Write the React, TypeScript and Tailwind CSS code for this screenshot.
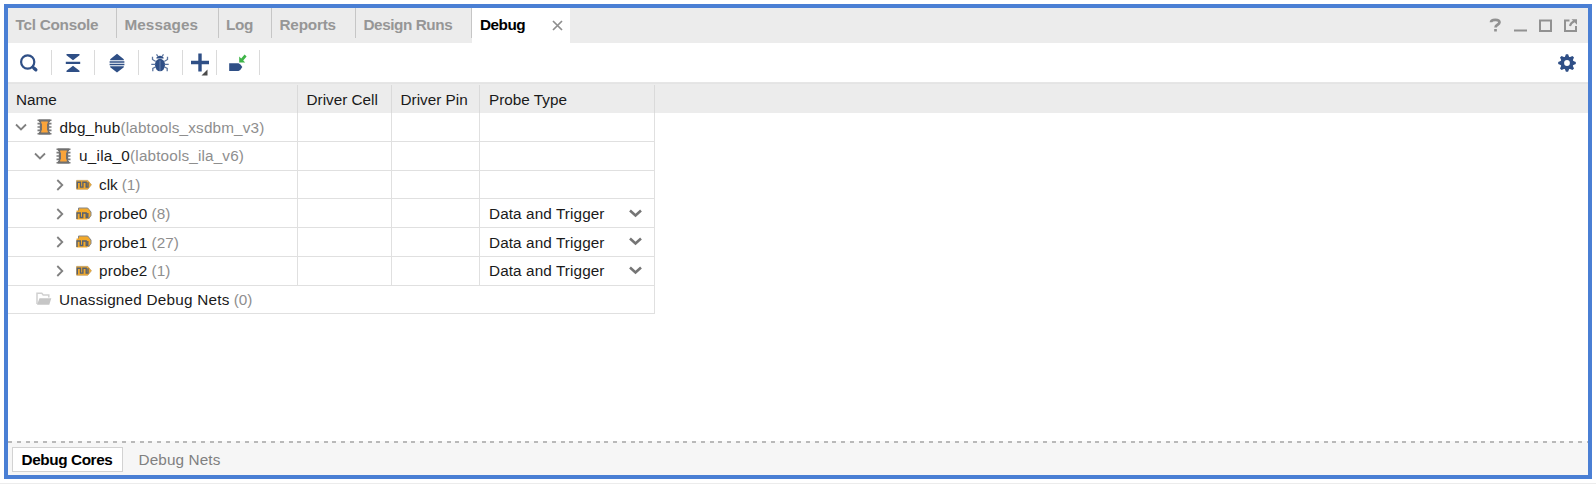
import type { ReactNode } from "react";

const NAVY = "#2f4f86";

const Sep = () => <div className="mt-px h-[25px] w-px shrink-0 bg-[#dadada]" />;

const Tool = ({ children, w }: { children: ReactNode; w: string }) => (
  <div className={`flex h-full shrink-0 items-center justify-center pt-px ${w}`}>{children}</div>
);

const SearchIcon = () => (
  <svg width="20" height="20" viewBox="0 0 20 20" fill="none" stroke={NAVY}>
    <circle cx="8.700" cy="9" r="6.600" strokeWidth="2.200" />
    <path d="M13 13.200l2 2" strokeWidth="2.400" />
    <path d="M15 15.200l1.800 1.600" strokeWidth="3.400" strokeLinecap="round" />
  </svg>
);
const CollapseIcon = () => (
  <svg width="20" height="20" viewBox="0 0 20 20" fill={NAVY}>
    <path d="M3.500 1h13v1.200L10 7.200 3.500 2.200zM2.800 8.800h14.400v2.200H2.800zM10 12.800l6.500 5V19h-13v-1.200z" />
  </svg>
);
const ExpandIcon = () => (
  <svg width="20" height="20" viewBox="0 0 20 20" fill={NAVY}>
    <path d="M10 0.800l6.800 5.400v1H3.200v-1zM2.600 8.200h14.800v1.500H2.600zM2.600 10.800h14.800v1.500H2.600zM3.200 13.200h13.600v1L10 19.400l-6.800-5.200z" />
  </svg>
);
const BugIcon = () => (
  <svg width="20" height="20" viewBox="0 0 20 20">
    <ellipse cx="10" cy="12" rx="5" ry="6.300" fill={NAVY} />
    <path d="M6.300 5.600C6.300 1.800 13.700 1.800 13.700 5.600z" fill={NAVY} />
    <path d="M8 3.500L6.500 1.300M12 3.500l1.500-2.200M5.800 8.500L2.500 6.500V3.800M14.200 8.500L17.500 6.500V3.800M1.300 11.300h4.200M18.700 11.300h-4.200M5.800 13.800L2.800 15.500v2.700M14.200 13.800L17.200 15.500v2.700" fill="none" stroke="#5d769f" strokeWidth="1.300" />
    <path d="M10 7.500V18" stroke="#7089b3" strokeWidth="0.900" />
  </svg>
);
const PlusIcon = () => (
  <svg width="24" height="26" viewBox="0 0 24 26">
    <path d="M4 12.500h18M13 3.500v18" stroke={NAVY} strokeWidth="3.400" />
    <path d="M20.500 19.500v6h-6z" fill="#4a4a4a" />
  </svg>
);
const ProbeArrowIcon = () => (
  <svg width="20" height="20" viewBox="0 0 20 20">
    <path d="M1.200 10.200H10.500Q12.500 10.800 14.300 14Q12.500 17.400 10.500 18H1.200z" fill={NAVY} />
    <path d="M11.200 3.400v6h6l-2-2 3.400-3.800-2-2-3.400 3.800z" fill="#3fb549" />
  </svg>
);
const GearIcon = () => (
  <svg width="20" height="20" viewBox="0 0 20 20">
    <g fill={NAVY}>
      {[0, 45, 90, 135].map((a) => (
        <path key={a} d="M8.900 1.200h2.200l1.100 3v11.600l-1.100 3H8.900l-1.100-3V4.200z" transform={`rotate(${a} 10 10)`} />
      ))}
      <circle cx="10" cy="10" r="6.500" />
    </g>
    <circle cx="10" cy="10" r="2.900" fill="#fff" />
  </svg>
);
const ChipIcon = () => (
  <svg width="16" height="16" viewBox="0 0 16 16" className="shrink-0">
    <path d="M0.500 1.200h14M0.500 4.600h14M0.500 8h14M0.500 11.400h14M0.500 14.800h14" stroke="#7c7c7c" strokeWidth="1.600" />
    <path d="M1.800 0.400h11.400v2l-1 1v9.200l1 1v2H1.800v-2l1-1V3.400l-1-1z" fill="#707070" />
    <path d="M4.200 2.500h6.600v1.600l-.8 1v5.800l.8 1v1.600H4.200v-1.600l.8-1V5.100l-.8-1z" fill="#f9a43a" />
  </svg>
);
const PinIcon = ({ bus }: { bus: boolean }) => (
  <svg width="16" height="16" viewBox="0 0 16 16" className="shrink-0">
    {bus ? (
      <>
        <path d="M2.500 5V2h9.200l3.300 4v3.500L12.500 13" fill="#f2a92b" stroke="#858585" strokeWidth="1" />
        <path d="M0.500 4.600h10.800l2.400 4.100-2.400 4.900H0.500z" fill="#f2a92b" />
        <path d="M1 13V7h3.300v4.500h2.400V7h3.500v4.500h1.600V7" fill="none" stroke="#56606f" strokeWidth="1.400" />
      </>
    ) : (
      <>
        <path d="M0.600 3.400h11.200l3.600 4.400-3.600 4.400H0.600z" fill="#f2a92b" stroke="#c39a55" strokeWidth="0.800" />
        <path d="M1.300 11.500V5.300h3.200v4.800h2.400V5.300h3.300v4.800h1.800V5.300" fill="none" stroke="#56606f" strokeWidth="1.400" />
      </>
    )}
  </svg>
);
const FolderIcon = () => (
  <svg width="16" height="14" viewBox="0 0 16 14" className="shrink-0">
    <path d="M1 12V1.200h4.800l1.400 1.800h5.600v2.500" fill="none" stroke="#d0d0d0" strokeWidth="1.500" />
    <path d="M3.500 6.300H15.300l-2 6.500H1z" fill="#c6c6c6" />
  </svg>
);
const Chevron = ({ open }: { open: boolean }) => (
  <svg width="12" height="12" viewBox="0 0 12 12" className="shrink-0" fill="none" stroke="#808080" strokeWidth="1.800">
    <path d={open ? "M1 3.500l5 5 5-5" : "M3.300 1l5 5-5 5"} />
  </svg>
);

const tabs = [
  { label: "Tcl Console", w: "w-[109px] tracking-[-0.250px]" },
  { label: "Messages", w: "w-[101.500px] tracking-[0.060px]" },
  { label: "Log", w: "w-[53.500px] tracking-[-0.300px]" },
  { label: "Reports", w: "w-[84px] tracking-[-0.200px]" },
  { label: "Design Runs", w: "w-[116px] tracking-[-0.430px]" },
];

const rows = [
  { pad: "pl-[6.500px]", open: true, icon: "chip", name: "dbg_hub", nt: "tracking-[0.200px]", note: "(labtools_xsdbm_v3)", gap: "tracking-[0.150px]" },
  { pad: "pl-[26px]", open: true, icon: "chip", name: "u_ila_0", nt: "tracking-[0.250px]", note: "(labtools_ila_v6)", gap: "tracking-[0.150px]" },
  { pad: "pl-[46px]", open: false, icon: "pin", name: "clk", nt: "", note: "(1)", gap: "ml-1" },
  { pad: "pl-[46px]", open: false, icon: "bus", name: "probe0", nt: "tracking-[0.150px]", note: "(8)", gap: "ml-1", type: true },
  { pad: "pl-[46px]", open: false, icon: "bus", name: "probe1", nt: "tracking-[0.150px]", note: "(27)", gap: "ml-1", type: true },
  { pad: "pl-[46px]", open: false, icon: "pin", name: "probe2", nt: "tracking-[0.150px]", note: "(1)", gap: "ml-1", type: true },
];

const GRID = "grid grid-cols-[289.500px_94px_88.500px_175px]";
const CELL = "border-r border-[#e0e0e0]";

export default function App() {
  return (
    <div className="h-[484px] w-[1596px] border-b border-[#ececec] bg-white pt-1 pl-1 font-['Liberation_Sans',Arial,sans-serif] text-[15.300px] leading-none whitespace-nowrap text-[#1a1a1a]">
      <div className="flex h-[475px] w-[1588px] flex-col border-4 border-[#4a7fd4] bg-white">
        <div className="flex h-[34.500px] shrink-0 bg-[#ececec] font-bold text-[#969696]">
          {tabs.map((t) => (
            <div key={t.label} className={`h-[29.500px] shrink-0 border-r border-[#c6c6c6] pt-[9px] pl-[7.500px] ${t.w}`}>
              {t.label}
            </div>
          ))}
          <div className="flex w-[97.500px] justify-between bg-white pt-[9px] pr-[7px] pl-[8px] text-black">
            <span className="tracking-[-0.500px]">Debug</span>
            <svg width="11" height="11" viewBox="0 0 11 11" className="mt-[3px]" stroke="#8e8e8e" strokeWidth="1.700">
              <path d="M1 1l9 9M10 1l-9 9" />
            </svg>
          </div>
          <div className="ml-auto flex pt-[8px] pr-[11px]">
            <svg width="90" height="18" viewBox="0 0 90 18" fill="none" stroke="#919191" strokeWidth="2">
              <path d="M4 6.300C4 3 12.500 3 12.500 6.300c0 2.700-4 2.200-4 5.200M8.500 13v2.500" strokeWidth="2.700" />
              <path d="M27 14.500h13" />
              <path d="M53 4.500h11v10.500H53z" />
              <path d="M82.500 4.500H78V15h11V10M83 10q.5-3 4.500-5" />
              <path d="M84.500 3.200h5.500v5.500z" fill="#919191" stroke="none" />
            </svg>
          </div>
        </div>
        <div className="flex h-[40px] shrink-0 items-center border-b border-[#e6e6e6]">
          <Tool w="w-[42.500px]"><SearchIcon /></Tool><Sep />
          <Tool w="w-[42.700px]"><CollapseIcon /></Tool><Sep />
          <Tool w="w-[42.700px]"><ExpandIcon /></Tool><Sep />
          <Tool w="w-[42.700px]"><BugIcon /></Tool><Sep />
          <Tool w="w-[33px]"><PlusIcon /></Tool><Sep />
          <Tool w="w-[42.500px]"><ProbeArrowIcon /></Tool><Sep />
          <div className="ml-auto pt-px pr-[11.500px]"><GearIcon /></div>
        </div>
        <div className="h-[30.500px] shrink-0 border-t border-[#e4e4e4] bg-[#ececec] pt-px">
          <div className={`${GRID} h-full [&>div]:border-r [&>div]:border-[#dadada] [&>div]:pt-[7px] [&>div]:pl-[9px]`}>
            <div><span className="-ml-px">Name</span></div>
            <div>Driver Cell</div>
            <div>Driver Pin</div>
            <div>Probe Type</div>
          </div>
        </div>
        {rows.map((r) => (
          <div key={r.name} className={`${GRID} h-[28.750px] w-[647px] shrink-0 border-b border-[#e0e0e0]`}>
            <div className={`${CELL} flex items-center pt-px ${r.pad}`}>
              <Chevron open={r.open} />
              <span className="mr-[7px] ml-[10px]">
                {r.icon === "chip" ? <ChipIcon /> : <PinIcon bus={r.icon === "bus"} />}
              </span>
              <span className={r.nt}>{r.name}</span>
              <span className={`text-[#8e8e8e] ${r.gap}`}>{r.note}</span>
            </div>
            <div className={CELL} />
            <div className={CELL} />
            <div className={`${CELL} flex items-center justify-between pt-px pr-[12px] pl-[9px]`}>
              {r.type && (
                <>
                  <span className="tracking-[0.100px]">Data and Trigger</span>
                  <svg width="13" height="9" viewBox="0 0 13 9" className="-mt-px" fill="none" stroke="#757575" strokeWidth="2.600">
                    <path d="M1 1.500l5.500 5 5.500-5" />
                  </svg>
                </>
              )}
            </div>
          </div>
        ))}
        <div className="flex h-[28.750px] w-[647px] shrink-0 items-center border-r border-b border-[#e0e0e0] pl-[28px]">
          <FolderIcon />
          <span className="ml-[7px] tracking-[0.230px]">Unassigned Debug Nets</span>
          <span className="ml-1 text-[#8e8e8e]">(0)</span>
        </div>
        <div className="mt-auto h-[2px] shrink-0 bg-[repeating-linear-gradient(90deg,#b9b9b9_0_4px,#f8f8f8_4px_8.770px)]" />
        <div className="flex h-[32px] shrink-0 items-center bg-[#f6f6f6] pl-[3.500px]">
          <div className="flex h-[25px] w-[111px] items-center justify-center border border-[#d2d2d2] bg-white pt-px font-bold tracking-[-0.400px] text-black">
            Debug Cores
          </div>
          <div className="ml-[16px] pt-px tracking-[0.120px] text-[#808080]">Debug Nets</div>
        </div>
      </div>
    </div>
  );
}
